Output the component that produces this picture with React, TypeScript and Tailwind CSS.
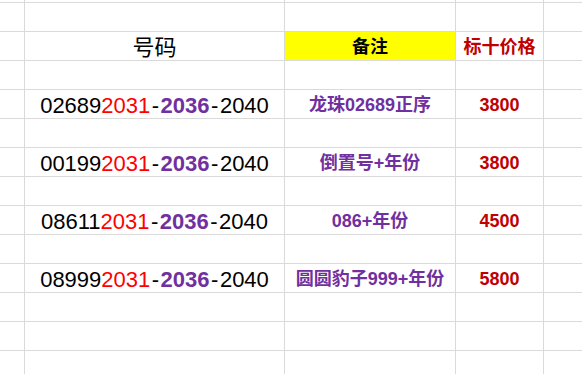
import React from "react";

type Row =
  | { kind: "empty" }
  | { kind: "header" }
  | { kind: "data"; prefix: string; note: string; price: string };

const rows: Row[] = [
  { kind: "empty" },
  { kind: "header" },
  { kind: "empty" },
  { kind: "data", prefix: "02689", note: "龙珠02689正序", price: "3800" },
  { kind: "empty" },
  { kind: "data", prefix: "00199", note: "倒置号+年份", price: "3800" },
  { kind: "empty" },
  { kind: "data", prefix: "08611", note: "086+年份", price: "4500" },
  { kind: "empty" },
  { kind: "data", prefix: "08999", note: "圆圆豹子999+年份", price: "5800" },
  { kind: "empty" },
  { kind: "empty" },
  { kind: "empty" },
];

const cell = "flex items-center justify-center whitespace-nowrap";

const App = () => {
  return (
    <div
      className="h-[374px] w-[582px] overflow-hidden bg-white"
      style={{ fontFamily: '"Liberation Sans", "Noto Sans CJK SC", sans-serif' }}
    >
      <div className="grid grid-cols-[24px_259px_170px_87px_1fr] grid-rows-[2px_repeat(13,28px)] gap-px bg-[#dadada]">
        {/* top sliver of the previous row */}
        {[0, 1, 2, 3, 4].map((i) => (
          <div key={`top-${i}`} className="bg-white" />
        ))}

        {rows.map((row, r) => {
          if (row.kind === "header") {
            return (
              <React.Fragment key={r}>
                <div className="bg-white" />
                <div className={`${cell} bg-white text-[22px] text-black pt-[2px]`}>号码</div>
                <div className={`${cell} bg-[#ffff00] text-[18px] font-bold text-black pt-[2px]`}>备注</div>
                <div className={`${cell} bg-white text-[18px] font-bold text-[#c00000] pt-[2px]`}>标十价格</div>
                <div className="bg-white" />
              </React.Fragment>
            );
          }
          if (row.kind === "data") {
            return (
              <React.Fragment key={r}>
                <div className="bg-white" />
                <div className={`${cell} bg-white text-[22px] text-black pt-[3px]`}>
                  <span>{row.prefix}</span>
                  <span className="text-[#ff0000]">2031</span>
                  <span className="mx-[1.5px]">-</span>
                  <span className="font-bold text-[#7030a0]">2036</span>
                  <span className="mx-[1.5px]">-</span>
                  <span>2040</span>
                </div>
                <div className={`${cell} bg-white text-[18px] font-bold text-[#7030a0] pt-[3px]`}>{row.note}</div>
                <div className={`${cell} bg-white text-[18px] font-bold text-[#c00000] pt-[3px]`}>{row.price}</div>
                <div className="bg-white" />
              </React.Fragment>
            );
          }
          return (
            <React.Fragment key={r}>
              {[0, 1, 2, 3, 4].map((i) => (
                <div key={i} className="bg-white" />
              ))}
            </React.Fragment>
          );
        })}
      </div>
    </div>
  );
};

export default App;
